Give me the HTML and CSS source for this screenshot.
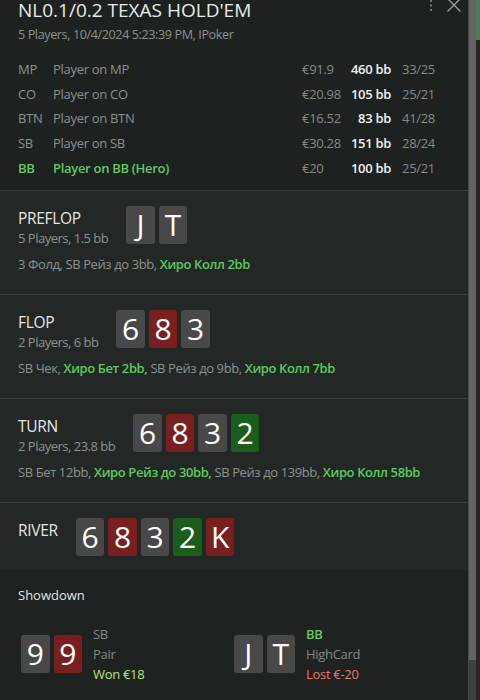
FILE: index.html
```html
<!DOCTYPE html>
<html>
<head>
<meta charset="utf-8">
<link rel="stylesheet" href="styles.css">
</head>
<body>
<div class="frame">
  <div class="panel">
    <header class="header">
      <div class="title-row">
        <h1 class="title">NL0.1/0.2 TEXAS HOLD'EM</h1>
        <div class="icons">
          <svg class="kebab" width="4" height="14" viewBox="0 0 4 14"><circle cx="2" cy="1" r="1" fill="#8d918f"/><circle cx="2" cy="5.5" r="1" fill="#8d918f"/><circle cx="2" cy="10" r="1" fill="#8d918f"/></svg>
          <svg class="close" width="16" height="16" viewBox="0 0 16 16"><path d="M1.5 -1.5 L14.5 11.5 M14.5 -1.5 L1.5 11.5" stroke="#9ca09e" stroke-width="1.3" fill="none"/></svg>
        </div>
      </div>
      <div class="subtitle">5 Players, 10/4/2024 5:23:39 PM, IPoker</div>
      <div class="players">
        <div class="prow"><span class="pos">MP</span><span class="pname">Player on MP</span><span class="money">€91.9</span><span class="bb">460 bb</span><span class="stat">33/25</span></div>
        <div class="prow"><span class="pos">CO</span><span class="pname">Player on CO</span><span class="money">€20.98</span><span class="bb">105 bb</span><span class="stat">25/21</span></div>
        <div class="prow"><span class="pos">BTN</span><span class="pname">Player on BTN</span><span class="money">€16.52</span><span class="bb">83 bb</span><span class="stat">41/28</span></div>
        <div class="prow"><span class="pos">SB</span><span class="pname">Player on SB</span><span class="money">€30.28</span><span class="bb">151 bb</span><span class="stat">28/24</span></div>
        <div class="prow hero"><span class="pos">BB</span><span class="pname">Player on BB (Hero)</span><span class="money">€20</span><span class="bb">100 bb</span><span class="stat">25/21</span></div>
      </div>
    </header>

    <section class="street">
      <div class="street-head">
        <div class="street-info"><div class="street-name">PREFLOP</div><div class="street-sub">5 Players, 1.5 bb</div></div>
        <div class="cards"><span class="card">J</span><span class="card">T</span></div>
      </div>
      <div class="actions">3 Фолд, SB Рейз до 3bb, <b class="hero-act">Хиро Колл 2bb</b></div>
    </section>

    <section class="street">
      <div class="street-head">
        <div class="street-info"><div class="street-name">FLOP</div><div class="street-sub">2 Players, 6 bb</div></div>
        <div class="cards"><span class="card">6</span><span class="card red">8</span><span class="card">3</span></div>
      </div>
      <div class="actions">SB Чек, <b class="hero-act">Хиро Бет 2bb,</b> SB Рейз до 9bb, <b class="hero-act">Хиро Колл 7bb</b></div>
    </section>

    <section class="street">
      <div class="street-head">
        <div class="street-info"><div class="street-name">TURN</div><div class="street-sub">2 Players, 23.8 bb</div></div>
        <div class="cards"><span class="card">6</span><span class="card red">8</span><span class="card">3</span><span class="card green">2</span></div>
      </div>
      <div class="actions">SB Бет 12bb, <b class="hero-act">Хиро Рейз до 30bb,</b> SB Рейз до 139bb, <b class="hero-act">Хиро Колл 58bb</b></div>
    </section>

    <section class="street street-last">
      <div class="street-head">
        <div class="street-info"><div class="street-name">RIVER</div></div>
        <div class="cards"><span class="card">6</span><span class="card red">8</span><span class="card">3</span><span class="card green">2</span><span class="card red">K</span></div>
      </div>
    </section>

    <section class="showdown">
      <div class="sd-title">Showdown</div>
      <div class="hands">
        <div class="hand">
          <div class="cards"><span class="card">9</span><span class="card red">9</span></div>
          <div class="hand-info"><div class="hpos">SB</div><div class="hrank">Pair</div><div class="won">Won €18</div></div>
        </div>
        <div class="hand">
          <div class="cards"><span class="card">J</span><span class="card">T</span></div>
          <div class="hand-info"><div class="hpos hero-pos">BB</div><div class="hrank">HighCard</div><div class="lost">Lost €-20</div></div>
        </div>
      </div>
    </section>
  </div>
  <div class="scrollbar"><div class="thumb"></div><div class="track"></div></div>
  <div class="outside"><div class="outside-top"></div></div>
</div>
</body>
</html>
```

FILE: styles.css
```css
* { box-sizing: border-box; }
html, body { margin: 0; padding: 0; }
body {
  width: 480px;
  height: 700px;
  overflow: hidden;
  background: #2d2523;
  font-family: "Segoe UI", "Open Sans", "Noto Sans", sans-serif;
  color: #8c918e;
  font-size: 13px;
}
.frame { display: flex; height: 700px; }
.panel {
  width: 468px;
  height: 700px;
  background: #1d211f;
  overflow: hidden;
}
.header { padding: 0 0 10px 18px; }
.title-row { display: flex; justify-content: space-between; align-items: flex-start; height: 20px; }
.title {
  margin: 0;
  font-size: 19px;
  font-weight: 400;
  line-height: 20px;
  color: #e8eae9;
  letter-spacing: 0;
}
.icons { display: flex; align-items: flex-start; gap: 13px; padding-right: 6px; }
.subtitle { margin-top: 6px; line-height: 18px; font-size: 12.6px; letter-spacing: -0.4px; }
.players { margin-top: 13px; }
.prow {
  display: grid;
  grid-template-columns: 35px 249px 46px 43px 60px;
  height: 24.7px;
  line-height: 24.7px;
  letter-spacing: -0.3px;
  white-space: nowrap;
}
.money { color: #858a87; }
.bb { text-align: right; color: #f0f2f1; font-weight: 600; }
.stat { padding-left: 11px; color: #858a87; }
.hero .pos, .hero .pname { color: #64c864; font-weight: 600; }

.street {
  background: #232826;
  border-top: 1px solid #3b403e;
  padding: 15px 18px 21px;
}
.street-last { padding-bottom: 14px; }
.street-head { display: flex; align-items: flex-start; gap: 18px; }
.street-info { padding-top: 1px; }
.street-name { font-size: 15.5px; line-height: 22px; color: #e4e6e5; letter-spacing: -0.3px; }
.street-sub { line-height: 19px; letter-spacing: -0.5px; }
.actions { margin-top: 7px; line-height: 18px; letter-spacing: -0.4px; white-space: nowrap; }
.hero-act { color: #5cc85c; font-weight: 600; }

.cards { display: flex; gap: 4px; }
.card {
  width: 28.5px;
  height: 38px;
  border-radius: 3px;
  background: #484848;
  color: #ffffff;
  font-size: 30px;
  line-height: 38px;
  text-align: center;
}
.card.red { background: #7a1f1f; }
.card.green { background: #1b5e1b; }

.showdown {
  background: #1e2220;
  padding: 15px 0 0 18px;
  height: 129px;
}
.sd-title { font-size: 13px; line-height: 20px; color: #e2e4e3; font-weight: 500; }
.hands { display: grid; grid-template-columns: 213px 213px; margin-top: 19px; padding-left: 3px; }
.hand { display: flex; align-items: center; gap: 11px; }
.hand-info { line-height: 20px; letter-spacing: -0.3px; }
.hpos, .hrank { color: #858a87; }
.hero-pos { color: #64c864; font-weight: 600; }
.won { color: #b2e678; }
.lost { color: #e8796b; }

.scrollbar {
  width: 8px;
  height: 700px;
  display: flex;
  flex-direction: column;
  border-left: 1px solid #4b4b4b;
}
.thumb { height: 660px; background: #646464; }
.track { flex: 1; background: #3a4140; }
.outside { width: 4px; height: 700px; background: #2d2523; }
.outside-top { height: 40px; background: #4d7d56; }
```
